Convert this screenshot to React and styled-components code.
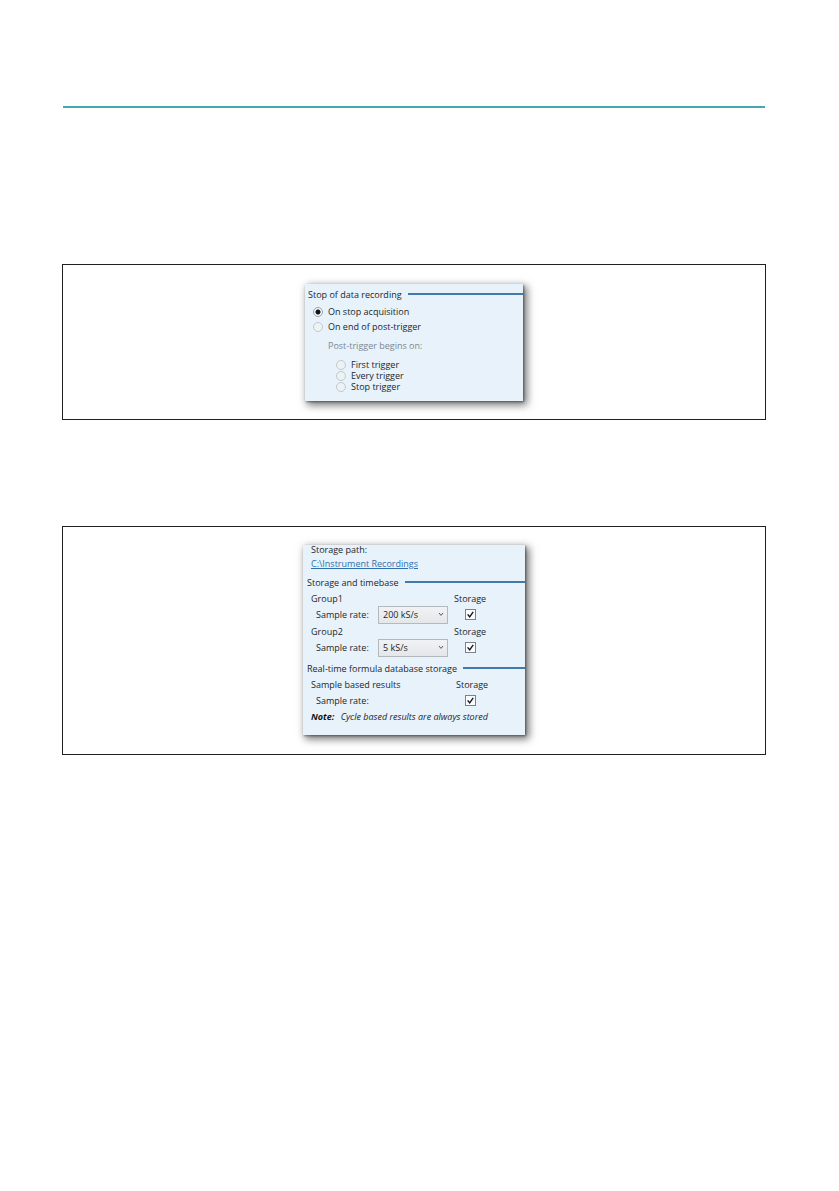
import React, {useState} from "react";
import styled, {createGlobalStyle, css} from 'styled-components';

const GlobalStyle = createGlobalStyle`
  * {
    box-sizing: border-box;
  }

  body {
    margin: 0;
    background: #ffffff;
    color: #20262c;
    font-family: "Open Sans", "Noto Sans", sans-serif;
    font-size: 9px;
  }
`;

const Page = styled.main`
  padding: 106px 73px 60px 62px;
`;

const HeaderRule = styled.hr`
  height: 2px;
  margin: 0 1px 156px;
  border: 0;
  background: #45a9b0;
`;

const Figure = styled.figure`
  display: flex;
  justify-content: center;
  margin: 0 0 106px;
  padding: ${({$wide}) => ($wide ? '18px 0 19px' : '19px 0 18px')};
  border: 1px solid #231f20;
`;

const Panel = styled.section`
  width: ${({$wide}) => ($wide ? '222px' : '218px')};
  padding-bottom: ${({$wide}) => ($wide ? '12px' : '9px')};
  background: #e8f2fb;
  box-shadow: 1px 1px 2px rgba(0, 0, 0, 0.4), 3px 3px 8px 1px rgba(0, 0, 0, 0.55);
`;

const SectionTitle = styled.h2`
  display: flex;
  align-items: center;
  gap: 6px;
  height: 20px;
  margin: 0;
  padding-left: ${({$inset}) => $inset || '4px'};
  font-size: 9px;
  font-weight: 400;
  white-space: nowrap;

  &::after {
    content: '';
    flex: 1;
    height: 2px;
    background: #4279a8;
  }
`;

const RadioList = styled.div`
  display: flex;
  flex-direction: column;
  padding-left: ${({$nested}) => ($nested ? '31px' : '8px')};
`;

const RadioLabel = styled.label`
  display: flex;
  align-items: center;
  gap: 5px;
  height: ${({$small}) => ($small ? '11px' : '15px')};
`;

const Radio = styled.input`
  appearance: none;
  width: 10px;
  height: 10px;
  margin: 0;
  border: 1px solid #c3c9cd;
  border-radius: 50%;
  background: #edf2f5;

  &:checked {
    border-color: #9aa2a9;
    background: radial-gradient(circle, #10151a 0 2px, #f4f8fb 3px);
  }
`;

const GroupCaption = styled.p`
  height: 15px;
  margin: 4px 0 6px;
  padding-left: 23px;
  color: #7d868f;
  line-height: 15px;
`;

const PathBlock = styled.div`
  padding-left: 8px;
`;

const PathLabel = styled.div`
  height: 11px;
  line-height: 10px;
`;

const PathLink = styled.a`
  display: block;
  height: 16px;
  color: #2f6fae;
  line-height: 16px;
  text-decoration: underline;
`;

const Group = styled.div`
  display: grid;
  grid-template-columns: 67px 76px 1fr;
  grid-template-rows: 12px 21px;
  align-items: center;
  padding-left: 8px;
  white-space: nowrap;
`;

const GroupName = styled.span`
  grid-column: 1 / 3;
`;

const StorageLabel = styled.label`
  padding-left: ${({$inset}) => $inset || 0};
`;

const RateLabel = styled.label`
  padding-left: 5px;
`;

const SelectBox = styled.div`
  position: relative;
  width: 70px;
  height: 18px;

  svg {
    position: absolute;
    top: 6px;
    right: 4px;
    width: 6px;
    height: 5px;
    pointer-events: none;
  }
`;

const Select = styled.select`
  appearance: none;
  width: 100%;
  height: 100%;
  padding: 0 14px 0 4px;
  border: 1px solid #b4b9be;
  border-radius: 0;
  background: linear-gradient(#f1f2f3, #e4e7e9);
  color: inherit;
  font: inherit;
`;

const CheckBox = styled.span`
  display: grid;
  grid-column: 3;
  width: 11px;
  height: 11px;
  margin-left: 11px;

  svg {
    grid-area: 1 / 1;
    width: 11px;
    height: 11px;
    pointer-events: none;
  }
`;

const CheckInput = styled.input`
  appearance: none;
  grid-area: 1 / 1;
  width: 11px;
  height: 11px;
  margin: 0;
  border: 1px solid #7c8287;
  background: #fbfcfd;

  ${({checked}) => !checked && css`
    & + svg {
      display: none;
    }
  `}
`;

const Note = styled.p`
  height: 12px;
  margin: 0;
  padding-left: 8px;
  font-style: italic;
  line-height: 12px;

  strong {
    margin-right: 4px;
    color: #101418;
  }
`;

const RateSelect = ({id, value}) => (
    <SelectBox>
        <Select id={id} defaultValue={value}>
            <option>200 kS/s</option>
            <option>5 kS/s</option>
        </Select>
        <svg viewBox="0 0 6 5" fill="none" stroke="#555b61">
            <path d="M1 1l2 2.4L5 1" />
        </svg>
    </SelectBox>
)

const StorageGroup = ({id, name, rate}) => {
    const [stored, setStored] = useState(true)

    return (
        <Group>
            <GroupName>{name}</GroupName>
            <StorageLabel htmlFor={`${id}-storage`} $inset={rate ? 0 : '2px'}>Storage</StorageLabel>
            <RateLabel as={rate ? 'label' : 'span'} htmlFor={rate ? `${id}-rate` : undefined}>
                Sample rate:
            </RateLabel>
            {rate && <RateSelect id={`${id}-rate`} value={rate} />}
            <CheckBox>
                <CheckInput
                    id={`${id}-storage`}
                    type="checkbox"
                    checked={stored}
                    onChange={e => setStored(e.target.checked)}
                />
                <svg viewBox="0 0 11 11" fill="none" stroke="#15191d" strokeWidth="1.4">
                    <path d="M2.6 5.4l2.1 2.4L8.2 2.8" />
                </svg>
            </CheckBox>
        </Group>
    )
}

const RecordingPanel = () => (
    <Panel>
        <SectionTitle $inset="3px">Stop of data recording</SectionTitle>
        <RadioList>
            <RadioLabel>
                <Radio type="radio" name="stop" defaultChecked />
                On stop acquisition
            </RadioLabel>
            <RadioLabel>
                <Radio type="radio" name="stop" />
                On end of post-trigger
            </RadioLabel>
        </RadioList>
        <GroupCaption>Post-trigger begins on:</GroupCaption>
        <RadioList $nested>
            {['First trigger', 'Every trigger', 'Stop trigger'].map(text => (
                <RadioLabel key={text} $small>
                    <Radio type="radio" name="begin" disabled />
                    {text}
                </RadioLabel>
            ))}
        </RadioList>
    </Panel>
)

const StoragePanel = () => (
    <Panel $wide>
        <PathBlock>
            <PathLabel>Storage path:</PathLabel>
            <PathLink href="#recordings">C:\Instrument Recordings</PathLink>
        </PathBlock>
        <SectionTitle>Storage and timebase</SectionTitle>
        <StorageGroup id="group1" name="Group1" rate="200 kS/s" />
        <StorageGroup id="group2" name="Group2" rate="5 kS/s" />
        <SectionTitle>Real-time formula database storage</SectionTitle>
        <StorageGroup id="results" name="Sample based results" />
        <Note><strong>Note:</strong> Cycle based results are always stored</Note>
    </Panel>
)

const App = () => (
    <Page>
        <GlobalStyle />
        <HeaderRule />
        <Figure>
            <RecordingPanel />
        </Figure>
        <Figure $wide>
            <StoragePanel />
        </Figure>
    </Page>
)

export default App
